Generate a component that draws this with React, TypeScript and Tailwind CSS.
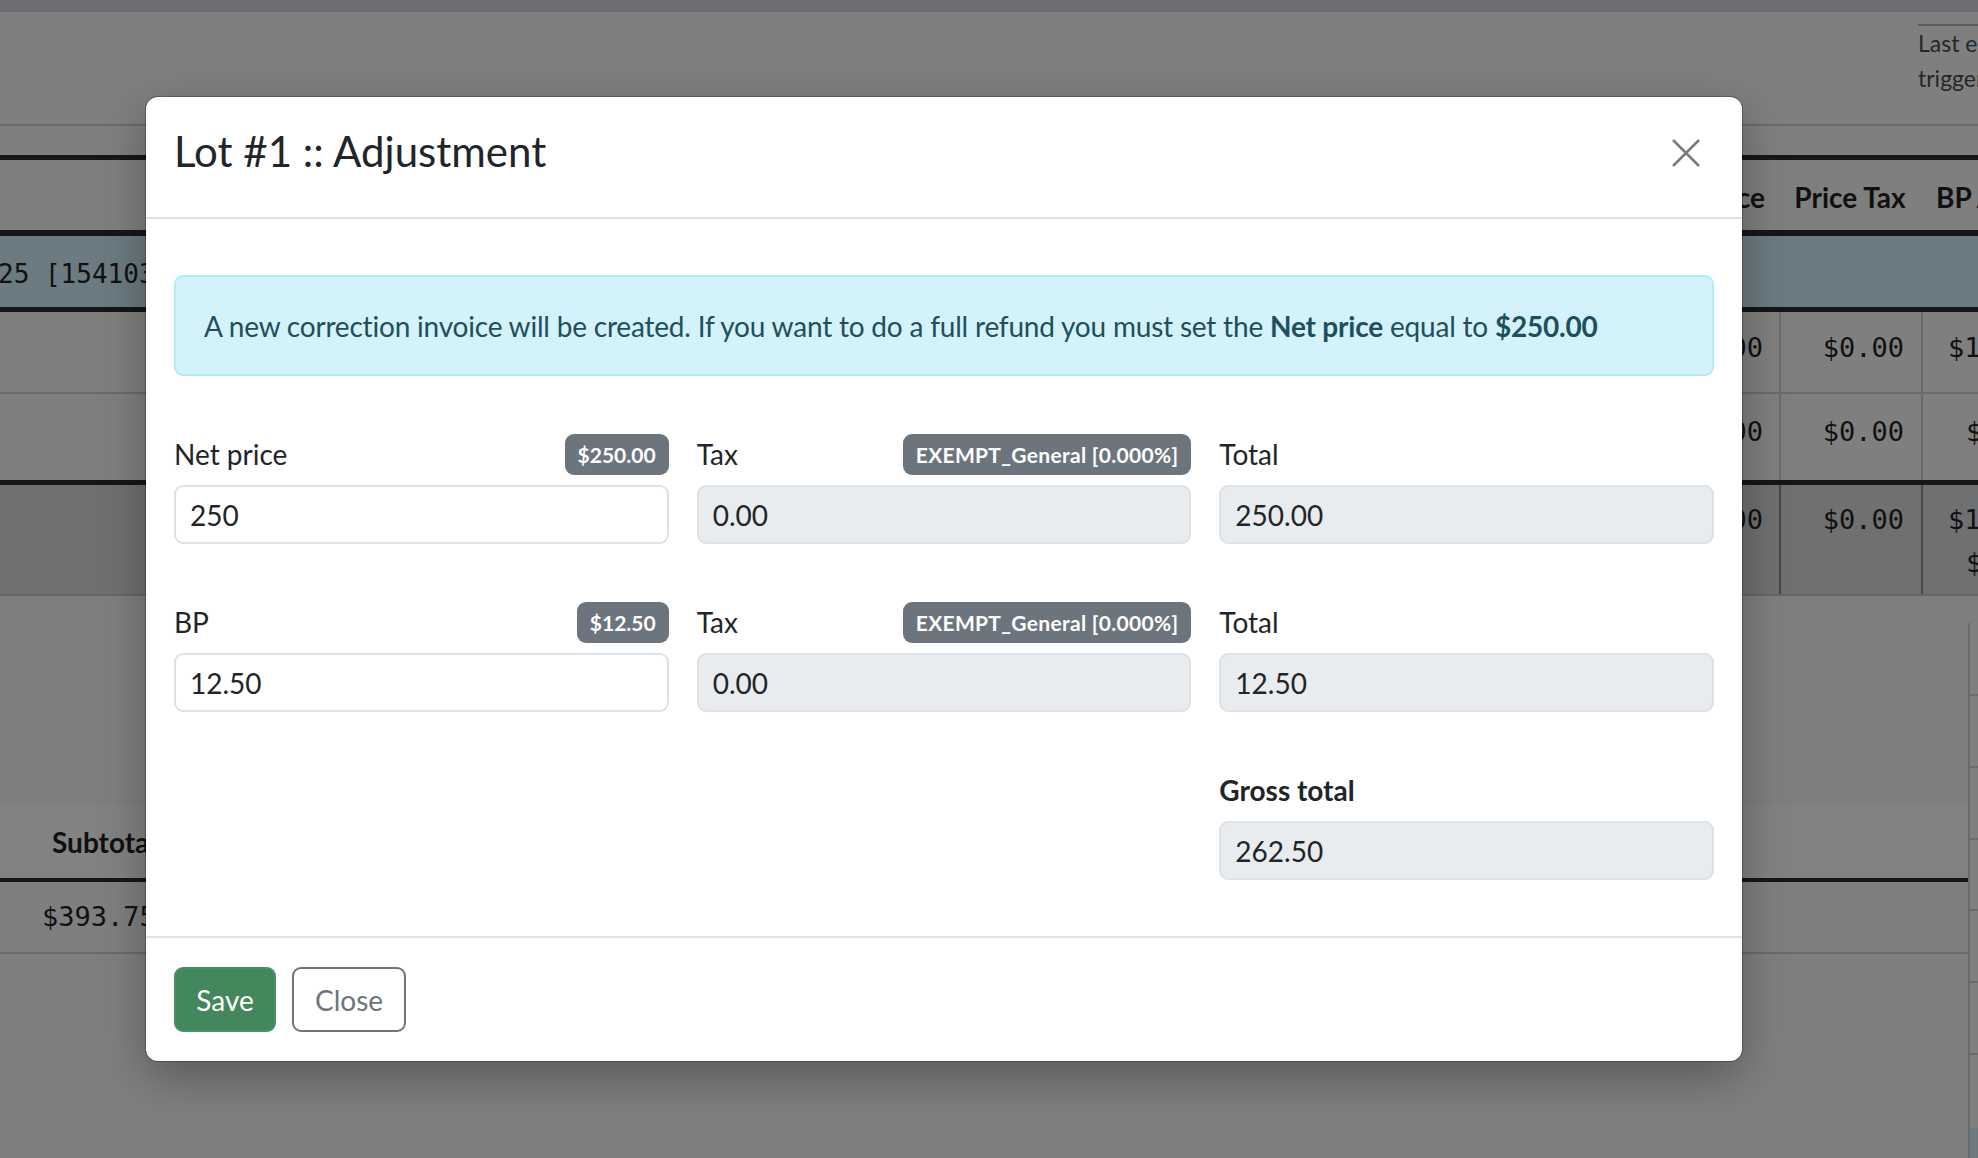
import React from "react";

const mono = "font-[family-name:'DejaVu_Sans_Mono',monospace]";

function Background() {
  return (
    <div className="flex flex-col w-full h-full">
      <div className="h-[12px] bg-[#6d6e71]" />
      <div className="h-[114px] border-b-2 border-[#6a6a6a] flex justify-end">
        <div className="w-[60px] mt-[12px] border-t-2 border-[#5c5c5c] text-[23px] leading-[35px] text-[#262626] whitespace-nowrap overflow-hidden">
          Last edited
          <br />
          triggered
        </div>
      </div>
      <div className="h-[29px]" />
      <div className="h-[5px] bg-[#161616]" />
      {/* header row */}
      <div className="h-[70px] flex items-center pt-[4px] text-[28px] font-bold text-[#101010]">
        <div className="flex-1 text-right pr-[14px] whitespace-nowrap">Hammer Price</div>
        <div className="w-[142px] text-center whitespace-nowrap">Price Tax</div>
        <div className="w-[57px] pl-[15px] whitespace-nowrap overflow-hidden">BP Amount</div>
      </div>
      <div className="h-[6px] bg-[#161616]" />
      <div className={`h-[71px] bg-[#6b7b81] flex items-center pt-[6px] ${mono} text-[26px] text-[#111]`}>
        <span className="ml-[-2px] whitespace-nowrap">25 [1541039]</span>
      </div>
      <div className="h-[5px] bg-[#161616]" />
      <div className={`h-[82px] flex border-b-2 border-[#6a6a6a] ${mono} text-[27px] leading-[40px] text-[#111]`}>
        <div className="flex-1 text-right pr-[16px] pt-[16px]">$125.00</div>
        <div className="w-[142px] border-l-2 border-[#6a6a6a] text-right pr-[17px] pt-[16px]">$0.00</div>
        <div className="w-[57px] border-l-2 border-[#6a6a6a] pl-[25px] pt-[16px] whitespace-nowrap overflow-hidden">$125.00</div>
      </div>
      <div className={`h-[86px] flex ${mono} text-[27px] leading-[40px] text-[#111]`}>
        <div className="flex-1 text-right pr-[16px] pt-[18px]">$125.00</div>
        <div className="w-[142px] border-l-2 border-[#6a6a6a] text-right pr-[17px] pt-[18px]">$0.00</div>
        <div className="w-[57px] border-l-2 border-[#6a6a6a] pl-[43px] pt-[18px] whitespace-nowrap overflow-hidden">$12.50</div>
      </div>
      <div className="h-[5px] bg-[#161616]" />
      <div className={`h-[111px] flex bg-[#6f7072] border-b-2 border-[#666] ${mono} text-[27px] leading-[43px] text-[#111]`}>
        <div className="flex-1 text-right pr-[16px] pt-[13px]">$250.00</div>
        <div className="w-[142px] border-l-2 border-[#474747] text-right pr-[17px] pt-[13px]">$0.00</div>
        <div className="w-[57px] border-l-2 border-[#474747] pt-[13px] whitespace-nowrap overflow-hidden">
          <div className="pl-[25px]">$137.50</div>
          <div className="pl-[43px]">$12.50</div>
        </div>
      </div>
      {/* lower area */}
      <div className="flex flex-1">
        <div className="flex-1 flex flex-col">
          <div className="h-[210px]" />
          <div className="h-[72px] bg-[#828282] flex items-center pl-[52px] text-[28px] font-bold text-[#101010]">
            Subtotal
          </div>
          <div className="h-[4px] bg-[#161616]" />
          <div className={`h-[72px] border-b-2 border-[#6a6a6a] flex items-center pl-[42px] ${mono} text-[27px] text-[#111]`}>
            $393.75
          </div>
        </div>
        <div className="w-[10px] mt-[27px] border-l-2 border-[#6a6a6a] flex flex-col">
          <div className="h-[73px] border-b-2 border-[#6a6a6a]" />
          <div className="h-[72px] border-b-2 border-[#6a6a6a]" />
          <div className="h-[72px] border-b-2 border-[#6a6a6a]" />
          <div className="h-[71px] border-b-2 border-[#6a6a6a]" />
          <div className="h-[72px] border-b-2 border-[#6a6a6a]" />
          <div className="h-[72px] border-b-2 border-[#6a6a6a]" />
          <div className="h-[73px]" />
          <div className="flex-1 bg-[#6b7b81]" />
        </div>
      </div>
    </div>
  );
}

function Badge({ children, wide }: { children: React.ReactNode; wide?: boolean }) {
  return (
    <span
      className={`inline-flex h-[41px] items-center px-[13px] rounded-[9px] bg-[#6c757d] text-white font-bold text-[21px] whitespace-nowrap ${
        wide ? "tracking-[0.3px]" : ""
      }`}
    >
      {children}
    </span>
  );
}

function Field({
  label,
  badge,
  value,
  readOnly,
  bold,
}: {
  label: string;
  badge?: string;
  value: string;
  readOnly?: boolean;
  bold?: boolean;
}) {
  return (
    <div className="flex flex-col">
      <div className="h-[41px] flex items-center justify-between">
        <span className={`text-[28px] leading-[41px] text-[#212529] ${bold ? "font-bold" : ""}`}>{label}</span>
        {badge ? <Badge wide={badge.length > 10}>{badge}</Badge> : null}
      </div>
      <input
        value={value}
        readOnly
        className={`mt-[10px] w-full h-[59px] border-2 border-[#dee2e6] rounded-[9px] px-[14px] text-[28px] text-[#212529] outline-none font-[family-name:Lato,sans-serif] ${
          readOnly ? "bg-[#e9ecef]" : "bg-white"
        }`}
      />
    </div>
  );
}

function Modal() {
  return (
    <div className="absolute left-[146px] top-[97px] w-[1596px] bg-white rounded-[12px] shadow-[0_0_0_1px_rgba(0,0,0,0.25),0_16px_48px_rgba(0,0,0,0.3)] flex flex-col">
      <div className="h-[122px] border-b-2 border-[#dee2e6] flex items-start justify-between pl-[28px] pr-[42px] pt-[23px]">
        <h4 className="text-[42px] leading-[63px] text-[#212529] font-normal">Lot #1 :: Adjustment</h4>
        <button className="mt-[19px] w-[28px] h-[28px] flex items-center justify-center">
          <svg width="28" height="28" viewBox="0 0 28 28" fill="none">
            <path d="M1 1 L27 27 M27 1 L1 27" stroke="#7b7b7b" strokeWidth="2.6" />
          </svg>
        </button>
      </div>
      <div className="px-[28px] pt-[56px] pb-[56px]">
        <div className="h-[101px] border-2 border-[#b3ebf8] bg-[#d3f2fa] rounded-[9px] flex items-center pl-[28px] text-[28px] tracking-[-0.2px] text-[#1e4f5d] whitespace-nowrap">
          <span>
            A new correction invoice will be created. If you want to do a full refund you must set the{" "}
            <b>Net price</b> equal to <b>$250.00</b>
          </span>
        </div>
        <div className="mt-[58px] grid grid-cols-3 gap-x-[28px] gap-y-[58px]">
          <Field label="Net price" badge="$250.00" value="250" />
          <Field label="Tax" badge="EXEMPT_General [0.000%]" value="0.00" readOnly />
          <Field label="Total" value="250.00" readOnly />
          <Field label="BP" badge="$12.50" value="12.50" />
          <Field label="Tax" badge="EXEMPT_General [0.000%]" value="0.00" readOnly />
          <Field label="Total" value="12.50" readOnly />
          <div />
          <div />
          <Field label="Gross total" value="262.50" readOnly bold />
        </div>
      </div>
      <div className="border-t-2 border-[#dee2e6] px-[28px] pt-[29px] pb-[29px] flex gap-[16px]">
        <button className="w-[102px] h-[65px] rounded-[9px] bg-[#43875c] border-2 border-[#4a9066] text-white text-[28px]">
          Save
        </button>
        <button className="w-[114px] h-[65px] rounded-[9px] bg-white border-2 border-[#6c757d] text-[#6c757d] text-[28px]">
          Close
        </button>
      </div>
    </div>
  );
}

export default function App() {
  return (
    <div className="relative w-[1978px] h-[1158px] overflow-hidden bg-[#7f7f7f] font-[family-name:Lato,sans-serif]">
      <Background />
      <Modal />
    </div>
  );
}
